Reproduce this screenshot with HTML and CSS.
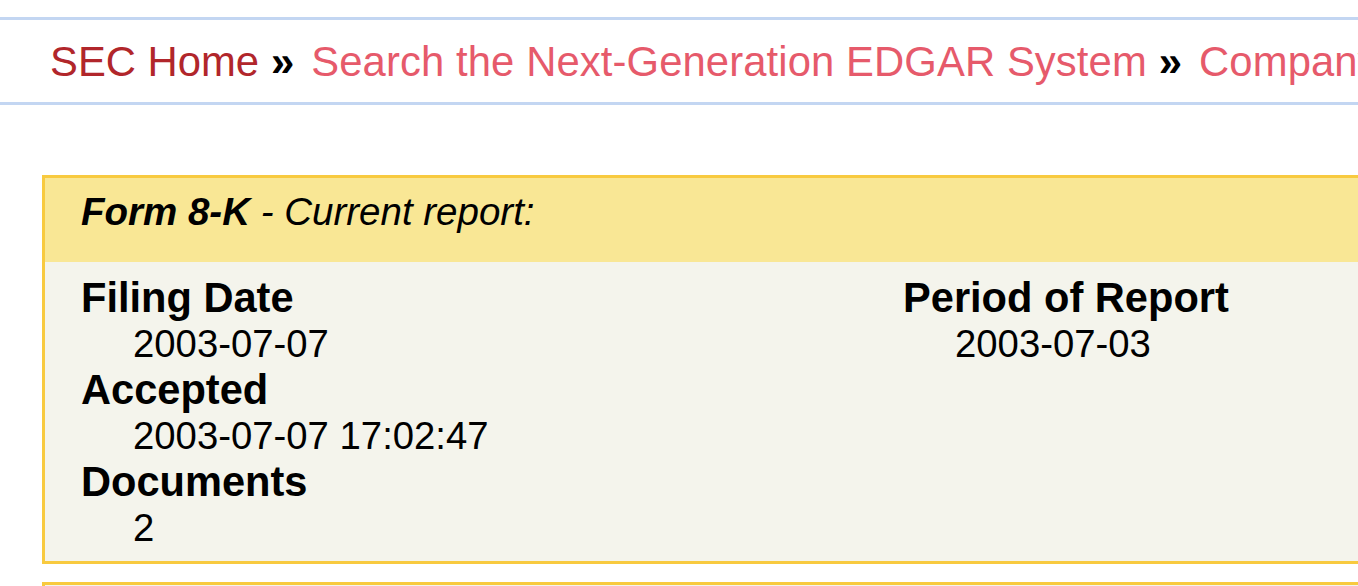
FILE: index.html
```html
<!DOCTYPE html>
<html lang="en">
<head>
<meta charset="utf-8">
<title>EDGAR Filing Index</title>
<link rel="stylesheet" href="styles.css">
</head>
<body>
<div class="breadcrumb">
  <a class="crumb home" href="#">SEC Home</a><span class="sep">»</span><a class="crumb" href="#">Search the Next-Generation EDGAR System</a><span class="sep">»</span><a class="crumb" href="#">Company Search</a><span class="sep">»</span><span class="current">Current Page</span>
</div>

<div class="form-box">
  <div class="form-head"><strong>Form 8-K</strong> - Current report:</div>
  <div class="form-body">
    <div class="group">
      <div class="info-head">Filing Date</div>
      <div class="info">2003-07-07</div>
      <div class="info-head">Accepted</div>
      <div class="info">2003-07-07 17:02:47</div>
      <div class="info-head">Documents</div>
      <div class="info">2</div>
    </div>
    <div class="group">
      <div class="info-head">Period of Report</div>
      <div class="info">2003-07-03</div>
    </div>
  </div>
</div>

<div class="form-box next"></div>
</body>
</html>
```

FILE: styles.css
```css
html {
  overflow: hidden;
}
body {
  margin: 0;
  font-family: "Liberation Sans", Arial, sans-serif;
  color: #000;
  background: #fff;
  width: 1600px;
}
.breadcrumb {
  margin-top: 17px;
  border-top: 3px solid #c3d6f2;
  border-bottom: 3px solid #c3d6f2;
  padding: 18px 0 16px 50px;
  font-size: 41.8px;
  white-space: nowrap;
}
.crumb {
  color: #e65a6b;
  text-decoration: none;
  letter-spacing: 0.1px;
}
.crumb.home {
  color: #b1262b;
  letter-spacing: 0;
}
.sep {
  font-weight: bold;
  padding: 0 17px 0 12px;
}
.current {
  color: #000;
}
.form-box {
  margin: 70px 0 0 42px;
  width: 1500px;
  border: 3px solid #f8ca3f;
  background: #f4f4ec;
}
.form-box.next {
  margin-top: 18px;
  height: 40px;
}
.form-head {
  background: #f9e795;
  padding: 12px 36px 28px;
  font-size: 38.5px;
  font-style: italic;
}
.form-body {
  display: flex;
  padding: 12px 36px 11px;
}
.group:first-child {
  width: 822px;
}
.info-head {
  font-weight: bold;
  font-size: 41.6px;
}
.info {
  font-size: 38.3px;
  padding-left: 52px;
}
```
